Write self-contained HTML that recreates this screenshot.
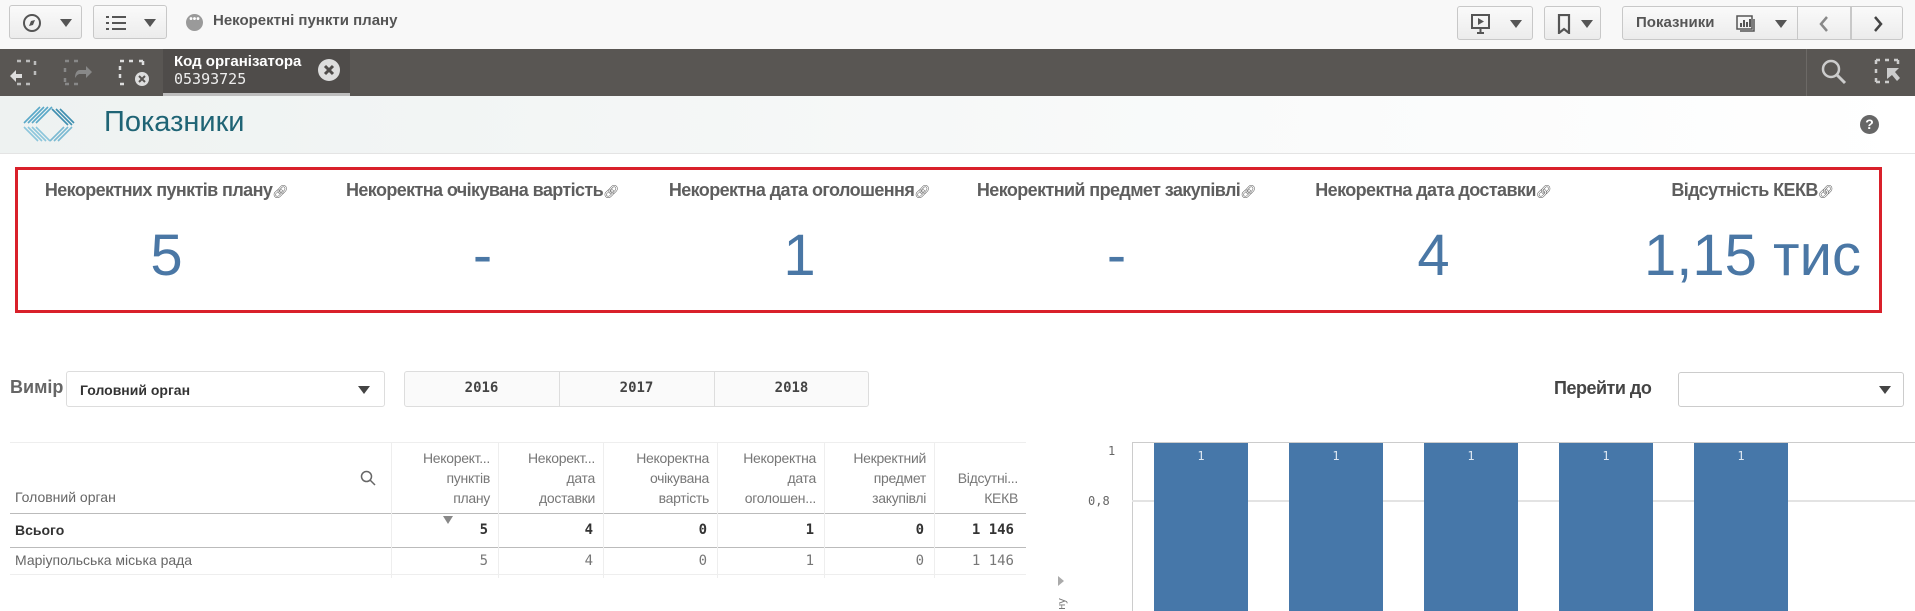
<!DOCTYPE html>
<html><head><meta charset="utf-8"><style>
*{box-sizing:border-box;margin:0;padding:0}
body{width:1915px;height:611px;overflow:hidden;background:#fff;font-family:"Liberation Sans",sans-serif;position:relative;color:#595959}
.a{position:absolute}
.btn{position:absolute;top:6px;height:42px;border:1px solid #c8c8c8;border-radius:3px;background:linear-gradient(#fafafa,#ececec)}
.tri{position:absolute;width:0;height:0;border-left:6px solid transparent;border-right:6px solid transparent;border-top:8px solid #555}
.dark{position:absolute;left:0;top:49px;width:1915px;height:47px;background:#595653}
.kt{position:absolute;top:180px;width:317px;text-align:center;font-weight:700;font-size:18px;color:#5e5e5e;letter-spacing:-0.6px;white-space:nowrap}
.kv{position:absolute;top:222px;width:317px;text-align:center;font-size:58px;color:#4a77a5}
.th{position:absolute;top:442px;height:71px;font-size:14px;color:#777;text-align:right;line-height:20px;padding:6px 8px 0 0;border-left:1px solid #eee;letter-spacing:-0.3px}
.td{position:absolute;height:34px;line-height:34px;text-align:right;padding-right:10px;font-family:"DejaVu Sans Mono",monospace;font-size:14px;border-left:1px solid #eee}
.bar{position:absolute;top:443px;height:168px;width:94px;background:#4677a9;color:#dfe8f2;font-family:"DejaVu Sans Mono",monospace;font-size:12px;text-align:center;padding-top:6px}
</style></head><body>
<div class="a" style="left:0;top:0;width:1915px;height:49px;background:#f8f8f8"></div>
<div class="btn" style="left:9px;width:73px;top:5px;height:34px"><svg class="a" style="left:12px;top:7px" width="20" height="20" viewBox="0 0 20 20"><circle cx="10" cy="10" r="8" fill="none" stroke="#555" stroke-width="2"/><path d="M13 7l-2 5-4 1 2-5z" fill="#555"/></svg><div class="tri" style="left:50px;top:13px"></div></div>
<div class="btn" style="left:93px;width:74px;top:5px;height:34px"><svg class="a" style="left:12px;top:9px" width="22" height="16" viewBox="0 0 22 16"><g fill="#555"><rect x="0" y="1" width="3" height="2"/><rect x="0" y="7" width="3" height="2"/><rect x="0" y="13" width="3" height="2"/><rect x="6" y="1" width="14" height="2"/><rect x="6" y="7" width="14" height="2"/><rect x="6" y="13" width="14" height="2"/></g></svg><div class="tri" style="left:50px;top:13px"></div></div>
<div class="a" style="left:186px;top:14px;width:17px;height:17px;border-radius:50%;background:#9a9a9a;color:#fff;font-size:10px;line-height:11px;text-align:center;font-weight:bold">•••</div>
<div class="a" style="left:213px;top:12px;font-size:15px;font-weight:bold;color:#555">Некоректні пункти плану</div>
<div class="btn" style="left:1457px;width:76px;top:6px;height:34px"><svg class="a" style="left:12px;top:6px" width="22" height="22" viewBox="0 0 22 22"><rect x="2" y="2" width="17" height="13" fill="none" stroke="#555" stroke-width="2"/><path d="M8 5l6 3.5-6 3.5z" fill="#555"/><path d="M10.5 15v4M7 20h7" stroke="#555" stroke-width="2"/></svg><div class="tri" style="left:52px;top:13px"></div></div>
<div class="btn" style="left:1544px;width:57px;top:6px;height:34px"><svg class="a" style="left:12px;top:7px" width="14" height="20" viewBox="0 0 14 20"><path d="M2 1h10v18l-5-4-5 4z" fill="none" stroke="#555" stroke-width="2.2"/></svg><div class="tri" style="left:36px;top:13px"></div></div>
<div class="btn" style="left:1622px;width:176px;top:6px;height:34px;border-radius:3px 0 0 3px"><div class="a" style="left:13px;top:7px;font-size:15px;font-weight:bold;color:#555">Показники</div><svg class="a" style="left:113px;top:8px" width="20" height="18" viewBox="0 0 20 18"><rect x="1" y="1" width="15" height="13" fill="none" stroke="#555" stroke-width="1.5"/><path d="M4 16h14V4" fill="none" stroke="#555" stroke-width="1.5"/><g fill="#555"><rect x="4" y="8" width="2" height="4"/><rect x="7" y="5" width="2" height="7"/><rect x="10" y="7" width="2" height="5"/><rect x="13" y="4" width="2" height="8"/></g></svg><div class="tri" style="left:152px;top:13px"></div></div>
<div class="btn" style="left:1798px;width:53px;top:6px;height:34px;border-radius:0;border-left:none"><svg class="a" style="left:20px;top:8px" width="12" height="18"><path d="M9 2L3 9l6 7" fill="none" stroke="#888" stroke-width="2.5"/></svg></div>
<div class="btn" style="left:1851px;width:52px;top:6px;height:34px;border-radius:0 3px 3px 0"><svg class="a" style="left:20px;top:8px" width="12" height="18"><path d="M3 2l6 7-6 7" fill="none" stroke="#444" stroke-width="2.5"/></svg></div>
<div class="dark"></div>
<svg class="a" style="left:8px;top:58px" width="32" height="30" viewBox="0 0 32 30"><path d="M9 3h4M18 3h4M27 3v4M27 13v4M9 26h4M18 26h4" stroke="#bbb" stroke-width="2.5"/><path d="M2 18l6-6v4h6v4H8v4z" fill="#ddd"/></svg>
<svg class="a" style="left:62px;top:58px" width="32" height="30" viewBox="0 0 32 30"><path d="M3 3h4M12 3h4M3 10v4M3 20v4M3 26h4M12 26h4" stroke="#888" stroke-width="2.5"/><path d="M30 14l-6-6v4h-6c-3 0-5 3-5 8 2-3 3-4 5-4h6v4z" fill="#888"/></svg>
<svg class="a" style="left:117px;top:58px" width="34" height="30" viewBox="0 0 34 30"><path d="M3 3h4M12 3h4M3 8v4M3 16v4M3 26h4M22 3h4M26 3v4" stroke="#ddd" stroke-width="2.5"/><circle cx="25" cy="21" r="7" fill="#ddd"/><path d="M22 18l6 6M28 18l-6 6" stroke="#595653" stroke-width="2"/></svg>
<div class="a" style="left:163px;top:49px;width:187px;height:47px;background:#4f4c4a;border-bottom:3px solid #bdbdbd"></div>
<div class="a" style="left:174px;top:53px;font-size:15px;font-weight:bold;color:#fff">Код організатора</div>
<div class="a" style="left:174px;top:70px;font-size:15px;color:#eee;font-family:'DejaVu Sans Mono',monospace">05393725</div>
<div class="a" style="left:318px;top:59px;width:22px;height:22px;border-radius:50%;background:#ddd"><svg width="22" height="22"><path d="M7 7l8 8M15 7l-8 8" stroke="#4f4c4a" stroke-width="3"/></svg></div>
<div class="a" style="left:1806px;top:49px;width:1px;height:47px;background:#6c6966"></div>
<svg class="a" style="left:1820px;top:58px" width="28" height="28" viewBox="0 0 28 28"><circle cx="11" cy="11" r="8" fill="none" stroke="#ccc" stroke-width="2.5"/><path d="M17 17l8 8" stroke="#ccc" stroke-width="3"/></svg>
<svg class="a" style="left:1874px;top:58px" width="28" height="28" viewBox="0 0 28 28"><path d="M2 2h4M11 2h4M20 2h4M24 2v4M2 2v4M2 11v4M2 20v4M2 24h4M11 24h4" stroke="#ccc" stroke-width="2.5"/><path d="M13 10h12l-4 4 5 6-3 3-5-6-5 4z" fill="#ccc"/></svg>
<div class="a" style="left:0;top:96px;width:1915px;height:58px;background:linear-gradient(90deg,#eef2f1,#fafbfb 70%,#fff);border-bottom:1px solid #e4e4e4"></div>
<svg class="a" style="left:18px;top:105px" width="58" height="40" viewBox="0 0 58 40"><g stroke="#5aa8c8" stroke-width="1.6" fill="none"><path d="M22 2L6 18M26 2L10 18M30 2L14 18M34 2L18 18"/><path d="M6 22l14 14M10 22l14 14M14 22l14 14M18 22l14 14" stroke="#8cc6dc"/><path d="M38 4l16 16M42 4l14 14M34 4l16 16" stroke="#3f8fb0"/><path d="M54 22L40 36M50 22L36 36M46 22L32 36" stroke="#7ab9d2"/></g></svg>
<div class="a" style="left:104px;top:106px;font-size:29px;color:#1f6475">Показники</div>
<div class="a" style="left:1860px;top:115px;width:19px;height:19px;border-radius:50%;background:#666;color:#fff;font-size:14px;font-weight:bold;text-align:center;line-height:19px">?</div>
<div class="a" style="left:15px;top:167px;width:1867px;height:146px;border:3px solid #d9202a"></div>
<div class="kt" style="left:8px">Некоректних пунктів плану<span style="font-weight:normal;font-size:13px">&#x1F517;&#xFE0E;</span></div>
<div class="kt" style="left:324px">Некоректна очікувана вартість<span style="font-weight:normal;font-size:13px">&#x1F517;&#xFE0E;</span></div>
<div class="kt" style="left:641px">Некоректна дата оголошення<span style="font-weight:normal;font-size:13px">&#x1F517;&#xFE0E;</span></div>
<div class="kt" style="left:958px">Некоректний предмет закупівлі<span style="font-weight:normal;font-size:13px">&#x1F517;&#xFE0E;</span></div>
<div class="kt" style="left:1275px">Некоректна дата доставки<span style="font-weight:normal;font-size:13px">&#x1F517;&#xFE0E;</span></div>
<div class="kt" style="left:1594px">Відсутність КЕКВ<span style="font-weight:normal;font-size:13px">&#x1F517;&#xFE0E;</span></div>
<div class="kv" style="left:8px">5</div>
<div class="kv" style="left:324px">-</div>
<div class="kv" style="left:641px">1</div>
<div class="kv" style="left:958px">-</div>
<div class="kv" style="left:1275px">4</div>
<div class="kv" style="left:1594px">1,15 тис</div>
<div class="a" style="left:10px;top:377px;font-size:18px;font-weight:bold;color:#666">Вимір</div>
<div class="a" style="left:66px;top:371px;width:319px;height:36px;border:1px solid #ddd;border-radius:3px"><div class="a" style="left:13px;top:10px;font-size:14px;font-weight:bold;color:#333">Головний орган</div><div class="tri" style="left:291px;top:14px;border-top-color:#444"></div></div>
<div class="a" style="left:404px;top:371px;width:465px;height:36px;border:1px solid #ddd;border-radius:3px;background:#fafafa"></div>
<div class="a" style="left:559px;top:372px;width:1px;height:34px;background:#ddd"></div>
<div class="a" style="left:714px;top:372px;width:1px;height:34px;background:#ddd"></div>
<div class="a" style="left:404px;top:380px;width:155px;text-align:center;font-family:'DejaVu Sans Mono',monospace;font-size:14px;font-weight:bold;color:#444">2016</div>
<div class="a" style="left:559px;top:380px;width:155px;text-align:center;font-family:'DejaVu Sans Mono',monospace;font-size:14px;font-weight:bold;color:#444">2017</div>
<div class="a" style="left:714px;top:380px;width:155px;text-align:center;font-family:'DejaVu Sans Mono',monospace;font-size:14px;font-weight:bold;color:#444">2018</div>
<div class="a" style="left:1554px;top:378px;font-size:18px;font-weight:bold;color:#444;letter-spacing:-0.5px">Перейти до</div>
<div class="a" style="left:1678px;top:372px;width:226px;height:35px;border:1px solid #ccc;border-radius:3px"><div class="tri" style="left:200px;top:13px;border-top-color:#444"></div></div>
<div class="a" style="left:10px;top:442px;width:1016px;height:1px;background:#eee"></div>
<div class="a" style="left:15px;top:489px;font-size:14px;color:#666">Головний орган</div>
<svg class="a" style="left:360px;top:470px" width="16" height="16"><circle cx="6.5" cy="6.5" r="5" fill="none" stroke="#666" stroke-width="1.5"/><path d="M10 10l5 5" stroke="#666" stroke-width="1.5"/></svg>
<div class="th" style="left:391px;width:107px">Некорект...<br>пунктів<br>плану</div>
<div class="th" style="left:498px;width:105px">Некорект...<br>дата<br>доставки</div>
<div class="th" style="left:603px;width:114px">Некоректна<br>очікувана<br>вартість</div>
<div class="th" style="left:717px;width:107px">Некоректна<br>дата<br>оголошен...</div>
<div class="th" style="left:824px;width:110px">Некректний<br>предмет<br>закупівлі</div>
<div class="th" style="left:934px;width:92px;padding-top:26px">Відсутні...<br>КЕКВ</div>
<div class="a" style="left:10px;top:513px;width:1016px;height:1px;background:#bbb"></div>
<div class="a" style="left:10px;top:547px;width:1016px;height:1px;background:#bbb"></div>
<div class="a" style="left:10px;top:574px;width:1016px;height:1px;background:#eee"></div>
<div class="tri" style="left:443px;top:516px;border-top-color:#888;border-left-width:5px;border-right-width:5px"></div>
<div class="a" style="left:15px;top:522px;font-size:14px;font-weight:bold;color:#333">Всього</div>
<div class="a" style="left:15px;top:552px;font-size:14px;color:#666">Маріупольська міська рада</div>
<div class="td" style="top:513px;left:391px;width:107px;font-weight:bold;color:#333">5</div>
<div class="td" style="top:513px;left:498px;width:105px;font-weight:bold;color:#333">4</div>
<div class="td" style="top:513px;left:603px;width:114px;font-weight:bold;color:#333">0</div>
<div class="td" style="top:513px;left:717px;width:107px;font-weight:bold;color:#333">1</div>
<div class="td" style="top:513px;left:824px;width:110px;font-weight:bold;color:#333">0</div>
<div class="td" style="top:513px;left:934px;width:92px;font-weight:bold;color:#333;padding-right:12px">1 146</div>
<div class="td" style="top:544px;left:391px;width:107px;color:#777">5</div>
<div class="td" style="top:544px;left:498px;width:105px;color:#777">4</div>
<div class="td" style="top:544px;left:603px;width:114px;color:#777">0</div>
<div class="td" style="top:544px;left:717px;width:107px;color:#777">1</div>
<div class="td" style="top:544px;left:824px;width:110px;color:#777">0</div>
<div class="td" style="top:544px;left:934px;width:92px;color:#777;padding-right:12px">1 146</div>
<div class="a" style="left:1132px;top:442px;width:783px;height:1px;background:#ccc"></div>
<div class="a" style="left:1132px;top:442px;width:1px;height:169px;background:#ccc"></div>
<div class="a" style="left:1132px;top:500px;width:783px;height:2px;background:#e3e3e3"></div>
<div class="a" style="left:1108px;top:444px;font-family:'DejaVu Sans Mono',monospace;font-size:12px;color:#666">1</div>
<div class="a" style="left:1088px;top:494px;font-family:'DejaVu Sans Mono',monospace;font-size:12px;color:#666">0,8</div>
<div class="bar" style="left:1154px">1</div>
<div class="bar" style="left:1289px">1</div>
<div class="bar" style="left:1424px">1</div>
<div class="bar" style="left:1559px">1</div>
<div class="bar" style="left:1694px">1</div>
<div class="a" style="left:1058px;top:576px;width:0;height:0;border-top:5px solid transparent;border-bottom:5px solid transparent;border-left:6px solid #aaa"></div>
<div class="a" style="left:1056px;top:598px;font-size:11px;color:#777;transform:rotate(-90deg)">ну</div>
</body></html>
